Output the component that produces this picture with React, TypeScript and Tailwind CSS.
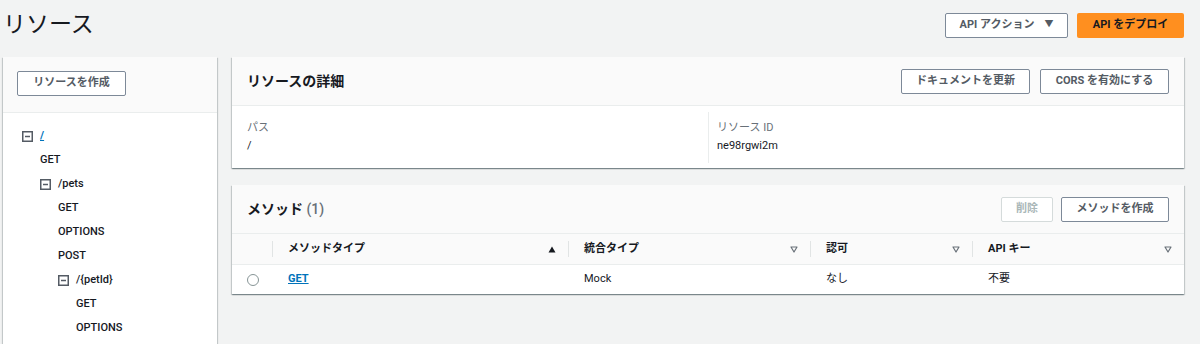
import React from 'react';

const font = { fontFamily: 'Roboto, "Noto Sans CJK JP", sans-serif' };

const MinusBox = () => (
  <svg width="11" height="11" viewBox="0 0 11 11" className="shrink-0">
    <rect x="0.75" y="0.75" width="9.5" height="9.5" fill="none" stroke="#545b64" strokeWidth="1.5" />
    <line x1="3" y1="5.5" x2="8" y2="5.5" stroke="#545b64" strokeWidth="1.5" />
  </svg>
);

const SortUp = () => (
  <svg width="8" height="7" viewBox="0 0 8 7">
    <path d="M4 0.5 L7.5 6.5 L0.5 6.5 Z" fill="#16191f" />
  </svg>
);

const SortDown = () => (
  <svg width="8" height="7" viewBox="0 0 8 7">
    <path d="M1 1 L7 1 L4 6 Z" fill="none" stroke="#687078" strokeWidth="1.2" strokeLinejoin="round" />
  </svg>
);

const Btn = ({ label, className = '' }: { label: string; className?: string }) => (
  <button
    className={`h-[25px] border border-[#7d8998] rounded-[2px] bg-white text-[11px] font-bold text-[#545b64] flex items-center justify-center ${className}`}
  >
    {label}
  </button>
);

const panelShadow =
  'shadow-[0_1px_1px_0_rgba(0,28,36,0.3),1px_1px_1px_0_rgba(0,28,36,0.15),-1px_1px_1px_0_rgba(0,28,36,0.15)]';

type Row = { kind: 'node' | 'method'; label: string; level: number; link?: boolean };

const tree: Row[] = [
  { kind: 'node', label: '/', level: 0, link: true },
  { kind: 'method', label: 'GET', level: 0 },
  { kind: 'node', label: '/pets', level: 1 },
  { kind: 'method', label: 'GET', level: 1 },
  { kind: 'method', label: 'OPTIONS', level: 1 },
  { kind: 'method', label: 'POST', level: 1 },
  { kind: 'node', label: '/{petId}', level: 2 },
  { kind: 'method', label: 'GET', level: 2 },
  { kind: 'method', label: 'OPTIONS', level: 2 },
];

const indent = ['pl-[19px]', 'pl-[37px]', 'pl-[55px]', 'pl-[73px]'];

const columns = [
  { title: 'メソッドタイプ', sort: 'up' },
  { title: '統合タイプ', sort: 'down' },
  { title: '認可', sort: 'down' },
  { title: 'API キー', sort: 'down' },
];

export default function App() {
  return (
    <div style={font} className="w-[1200px] h-[344px] overflow-hidden bg-[#f2f3f3] text-[#16191f]">
      {/* page header */}
      <div className="flex items-center justify-between h-[50px] pl-[3px] pr-4">
        <h1 className="text-[23px] font-normal text-[#16191f]">リソース</h1>
        <div className="flex gap-[9px]">
          <button className="h-[25px] w-[123px] border border-[#7d8998] rounded-[2px] bg-white text-[11px] font-bold text-[#545b64] flex items-center justify-center gap-[10px]">
            API アクション
            <span className="text-[9px] text-[#545b64]">▼</span>
          </button>
          <button className="h-[25px] w-[107px] rounded-[2px] bg-[#ff8f1f] text-[11px] font-bold text-[#16191f]">
            API をデプロイ
          </button>
        </div>
      </div>

      <div className="flex mt-[7px] pl-[3px] gap-[15px]">
        {/* resource tree */}
        <div className={`w-[214px] h-[300px] bg-white ${panelShadow}`}>
          <div className="h-[56px] bg-[#fafafa] border-b border-[#eaeded] pl-[14px] pt-[14px]">
            <Btn label="リソースを作成" className="w-[109px]" />
          </div>
          <div className="pt-[11px]">
            {tree.map((r, i) => (
              <div key={i} className={`h-6 flex items-center text-[11px] font-medium ${indent[r.kind === 'node' ? r.level : r.level + 1]}`}>
                {r.kind === 'node' ? (
                  <div className="flex items-center gap-[7px]">
                    <MinusBox />
                    <span className={r.link ? 'text-[#0073bb] font-bold underline' : 'text-[#16191f]'}>{r.label}</span>
                  </div>
                ) : (
                  <span>{r.label}</span>
                )}
              </div>
            ))}
          </div>
        </div>

        {/* right side */}
        <div className="w-[952px] flex flex-col gap-[17px]">
          <div className={`bg-white ${panelShadow}`}>
            <div className="h-[49px] bg-[#fafafa] border-b border-[#eaeded] flex items-center justify-between px-[15px]">
              <h2 className="text-[14px] font-bold">リソースの詳細</h2>
              <div className="flex gap-[10px]">
                <Btn label="ドキュメントを更新" className="w-[129px]" />
                <Btn label="CORS を有効にする" className="w-[129px]" />
              </div>
            </div>
            <div className="grid grid-cols-2 h-[62px] items-center">
              <div className="pl-[15px] flex flex-col gap-[1px]">
                <span className="text-[11px] text-[#687078]">パス</span>
                <span className="text-[11px]">/</span>
              </div>
              <div className="border-l border-[#eaeded] h-[51px] pl-[8px] flex flex-col justify-center gap-[1px]">
                <span className="text-[11px] text-[#687078]">リソース ID</span>
                <span className="text-[11px]">ne98rgwi2m</span>
              </div>
            </div>
          </div>

          <div className={`bg-white ${panelShadow}`}>
            <div className="h-[48px] bg-[#fafafa] flex items-center justify-between px-[15px]">
              <h2 className="text-[14px] font-bold">
                メソッド <span className="font-medium text-[#687078]">(1)</span>
              </h2>
              <div className="flex gap-[8px]">
                <button className="h-[25px] w-[52px] border border-[#d5dbdb] rounded-[2px] bg-white text-[11px] font-bold text-[#aab7b8]">
                  削除
                </button>
                <Btn label="メソッドを作成" className="w-[108px]" />
              </div>
            </div>
            <div className="grid grid-cols-[40px_296px_242px_162px_1fr] h-[31px] bg-[#fafafa] border-t border-[#eaeded] items-center">
              <div />
              {columns.map((c) => (
                <div key={c.title} className="flex items-center h-full">
                  <span className="h-4 w-px bg-[#e1e4e4]" />
                  <div className="flex-1 flex items-center justify-between pl-[15px] pr-[12px] text-[11px] font-bold">
                    <span>{c.title}</span>
                    {c.sort === 'up' ? <SortUp /> : <SortDown />}
                  </div>
                </div>
              ))}
            </div>
            <div className="grid grid-cols-[40px_296px_242px_162px_1fr] h-[30px] border-t border-[#eaeded] items-center text-[11px]">
              <div className="pl-[15px] flex items-center">
                <span className="w-3 h-3 rounded-full border border-[#879596] bg-white" />
              </div>
              <div className="pl-4">
                <span className="text-[#0073bb] font-bold underline">GET</span>
              </div>
              <div className="pl-4">Mock</div>
              <div className="pl-4">なし</div>
              <div className="pl-4">不要</div>
            </div>
          </div>
        </div>
      </div>
    </div>
  );
}
